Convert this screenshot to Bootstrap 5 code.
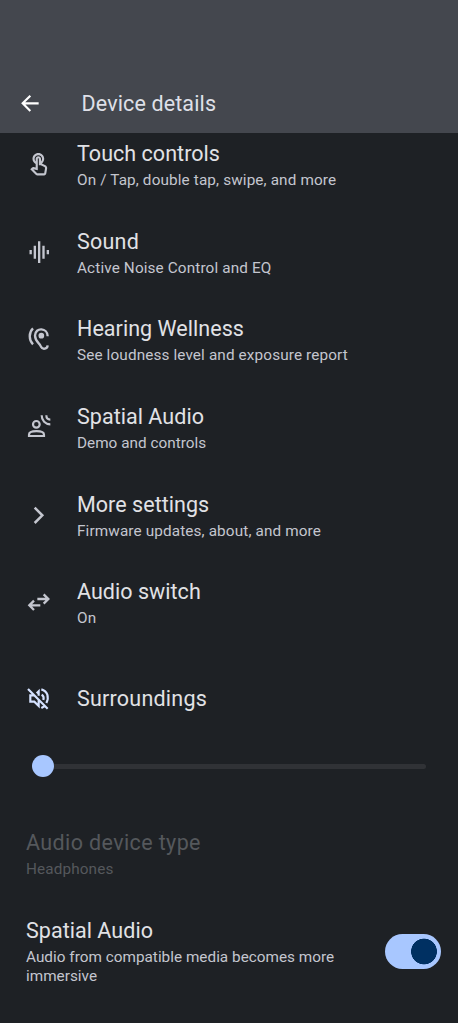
<!DOCTYPE html>
<html lang="en">
<head>
<meta charset="utf-8">
<meta name="viewport" content="width=device-width, initial-scale=1">
<title>Device details</title>
<link href="https://cdn.jsdelivr.net/npm/bootstrap@5.3.0/dist/css/bootstrap.min.css" rel="stylesheet">
<style>
body{background:#1e2125;color:#e1e2e6;font-family:Roboto,"Noto Sans",sans-serif;height:1023px;overflow:hidden}
.topbar{background:#44474e;height:133px;padding:0 0 10px 10px;z-index:1}
.topbar h1{font-size:21.5px;line-height:38px;letter-spacing:.13px;color:#dfe0e8;margin-left:31.5px;font-weight:400}
.glyph{width:40px;height:40px;flex:none;fill:none;stroke:#c4c6cf;stroke-width:7.5}
.topbar .glyph{stroke:#fff}
.settings{margin-top:-12px}
.entry{height:87.7px;padding-left:19.5px}
.entry .copy{margin-left:17.5px;padding-top:.4px}
.ttl{font-size:21.5px;line-height:28px;letter-spacing:.04px;white-space:nowrap}
.sub{font-size:15.3px;line-height:19px;letter-spacing:.13px;color:#c4c6cf;margin-top:3px}
.snug .sub{letter-spacing:.02px}
.wide{letter-spacing:.22px}
.wider{letter-spacing:.38px}
.tall{height:103.3px}
.slide{height:32px;padding:0 32px}
.rail{height:5px;background:#303236;width:100%}
.knob{width:22px;height:22px;background:#a8c7ff;flex:none}
.plain{padding-left:26px}
.kind{margin-top:47px}
.spatial{margin-top:38px}
.off,.off .sub{color:#55585c}
.form-switch .toggle{width:56px;height:35px;margin:0 17px 0 0;border:0;background-color:#a8c7ff!important;background-size:auto;background-image:radial-gradient(circle at 39px 17.5px,#003062 12.6px,transparent 13.2px)!important;background-position:0 0!important;box-shadow:none;float:none}
</style>
<script src="https://cdn.jsdelivr.net/npm/bootstrap@5.3.0/dist/js/bootstrap.bundle.min.js"></script>
</head>
<body>
<header class="topbar d-flex align-items-end position-relative">
  <svg class="glyph" viewBox="0 0 120 120"><path d="M86 61H38M61 38L38 61L61 84" stroke-width="6.500"/></svg>
  <h1 class="mb-0">Device details</h1>
</header>
<main>
  <div class="settings">
    <div class="entry d-flex align-items-center">
      <svg class="glyph" viewBox="0 0 120 120"><g transform="translate(18 20.8) scale(3.2)" fill="#c4c6cf" stroke="none"><path fill-rule="evenodd" d="M18.19 12.44l-3.24-1.62c1.29-1 2.12-2.56 2.12-4.32 0-3.03-2.47-5.5-5.5-5.5s-5.5 2.47-5.5 5.5c0 2.13 1.22 3.98 3 4.89v3.26c-2.11-.45-2.01-.44-2.26-.44-.53 0-1.03.21-1.41.59L4 16.22l5.09 5.09c.43.44 1.03.69 1.65.69h6.3c.98 0 1.81-.7 1.97-1.67l.8-4.71c.22-1.3-.43-2.58-1.62-3.18zM17.84 15.29L17.04 20h-6.3c-.09 0-.17-.04-.24-.1l-3.68-3.68 4.25.89V6.5c0-.28.22-.5.5-.5s.5.22.5.5v6h1.76l3.46 1.73c.4.2.62.63.55 1.06zM8.07 6.5c0-1.93 1.57-3.5 3.5-3.5s3.5 1.57 3.5 3.5c0 .95-.38 1.81-1 2.44V6.5c0-1.38-1.12-2.5-2.5-2.5s-2.5 1.12-2.5 2.5v2.44c-.62-.63-1-1.49-1-2.44z"/></g></svg>
      <div class="copy"><div class="ttl">Touch controls</div><div class="sub">On / Tap, double tap, swipe, and more</div></div>
    </div>
    <div class="entry d-flex align-items-center">
      <svg class="glyph" viewBox="0 0 120 120"><path d="M32 51V64M44.500 38V77M57.500 25V90M70.500 38V77M83.500 51V64" stroke-width="7"/></svg>
      <div class="copy"><div class="ttl wide">Sound</div><div class="sub">Active Noise Control and EQ</div></div>
    </div>
    <div class="entry d-flex align-items-center">
      <svg class="glyph" viewBox="0 0 120 120"><path d="M39 25C26 37 26 60 39 73M83 49C83 23 46 20 45 47C46 68 60 68 63 80C68 90 82 87 83 76" stroke-width="7"/><circle cx="64" cy="47" r="8.500" fill="#c4c6cf" stroke="none"/></svg>
      <div class="copy"><div class="ttl">Hearing Wellness</div><div class="sub">See loudness level and exposure report</div></div>
    </div>
    <div class="entry d-flex align-items-center snug">
      <svg class="glyph" viewBox="0 0 120 120"><g transform="translate(-1 1)" stroke-width="6.500"><circle cx="50" cy="48" r="10"/><path d="M28 83V79C28 65 73 65 73 79V83Z"/><path d="M66 21C66 37 77 48 92 48M80 21C80 29 84 34 92 34"/></g></svg>
      <div class="copy"><div class="ttl">Spatial Audio</div><div class="sub">Demo and controls</div></div>
    </div>
    <div class="entry d-flex align-items-center">
      <svg class="glyph" viewBox="0 0 120 120"><path d="M44 35L67 58L44 81"/></svg>
      <div class="copy"><div class="ttl">More settings</div><div class="sub">Firmware updates, about, and more</div></div>
    </div>
    <div class="entry d-flex align-items-center">
      <svg class="glyph" viewBox="0 0 120 120"><path d="M52 48H84M71 34L85 48L71 62M61 67H29M42 53L28 67L42 81" stroke-width="7"/></svg>
      <div class="copy"><div class="ttl">Audio switch</div><div class="sub">On</div></div>
    </div>
    <div class="entry tall d-flex align-items-center">
      <svg class="glyph" viewBox="0 0 120 120"><g stroke="#d5e2ff" stroke-width="6.500"><path d="M24 30L83 89M43 49H31V68H43L56 81V64M50 43L56 37V50M65 47C71 51 72 57 70 63M64 31C83 36 88 55 79 72M64 87L73 82"/></g></svg>
      <div class="copy"><div class="ttl wide">Surroundings</div></div>
    </div>
  </div>
  <div class="slide d-flex align-items-center"><div class="knob rounded-circle"></div><div class="rail rounded-end"></div></div>
  <div class="plain off kind"><div class="ttl wider">Audio device type</div><div class="sub">Headphones</div></div>
  <div class="plain spatial d-flex align-items-center justify-content-between form-switch snug">
    <div><div class="ttl">Spatial Audio</div><div class="sub">Audio from compatible media becomes more<br>immersive</div></div>
    <input class="form-check-input toggle" type="checkbox" role="switch" aria-label="Spatial Audio" checked>
  </div>
</main>
</body>
</html>
